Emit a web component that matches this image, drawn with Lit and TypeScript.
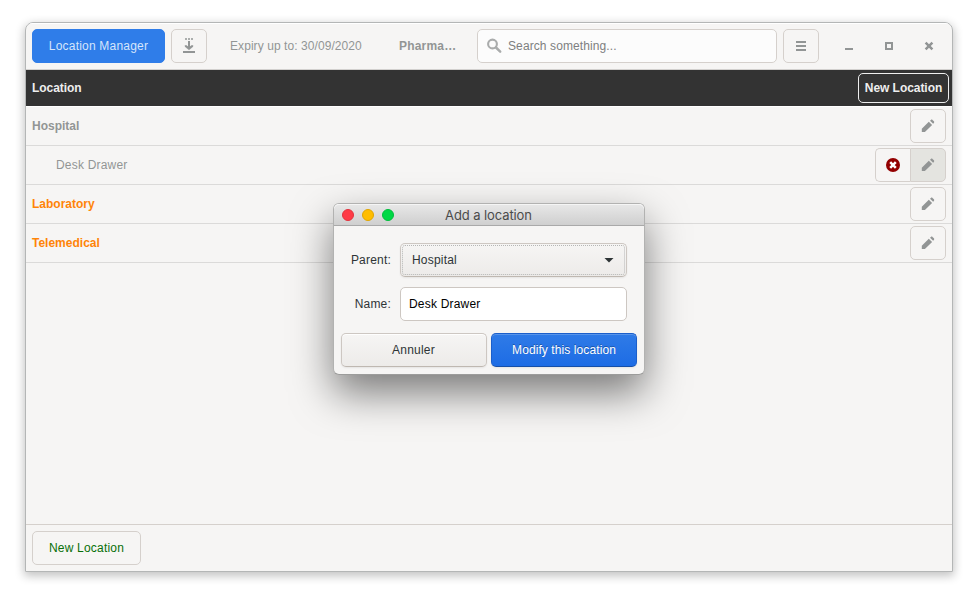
import { LitElement, html, css, svg } from "lit";
import { customElement, property } from "lit/decorators.js";
import { classMap } from "lit/directives/class-map.js";

const glyphs: Record<string, unknown> = {
  download: svg`<path d="M4 0h2v2H4zM7 0h2v2H7zM10 0h2v2h-2z" opacity=".75"/><path d="M7 3h2v5h3v1.2L8 12.6 4 9.2V8h3z" opacity=".2"/><path d="M7 3h2v5.4l1.4-1.2h1.8v1.4L8 12 3.8 8.6V7.2h1.8L7 8.4zM2 13h12v2H2z"/>`,
  search: svg`<circle cx="5.5" cy="6" r="4.4" fill="none" stroke="currentColor" stroke-width="2.1"/><path d="M9 9.5l4.2 4.1" stroke="currentColor" stroke-width="2.5" stroke-linecap="round"/>`,
  menu: svg`<path d="M3 3h10v2H3zM3 7h10v2H3zM3 11h10v2H3z"/>`,
  minimize: svg`<path d="M4 10h8v2H4z"/>`,
  maximize: svg`<path d="M4 4h8v8H4zM6 6v4h4V6z" fill-rule="evenodd"/>`,
  close: svg`<path d="M4.6 4.6l6.8 6.8M11.4 4.6l-6.8 6.8" stroke="currentColor" stroke-width="2.5"/>`,
  pencil: svg`<path d="M8.8 3.8l3.3 3.3-7.2 7H1.8v-3.3zM10 2.7l.9-.8c.5-.5 1.1-.5 1.6 0l1.4 1.4c.5.5.5 1.1 0 1.6l-.8.9z"/>`,
  remove: svg`<circle cx="8" cy="8" r="7"/><path d="M5.2 5.2l5.6 5.6M10.8 5.2l-5.6 5.6" stroke="#fff" stroke-width="2.5"/>`,
};

@customElement("ui-icon")
class UiIcon extends LitElement {
  @property() name = "";
  static styles = css`
    :host { display: block; width: 16px; height: 16px; flex: none; }
    svg { display: block; fill: currentColor; }
  `;
  render() {
    return html`<svg width="16" height="16" viewBox="0 0 16 16">${glyphs[this.name]}</svg>`;
  }
}

interface Place {
  name: string;
  kind: "parent" | "child" | "empty";
}

const places: Place[] = [
  { name: "Hospital", kind: "parent" },
  { name: "Desk Drawer", kind: "child" },
  { name: "Laboratory", kind: "empty" },
  { name: "Telemedical", kind: "empty" },
];

@customElement("location-dialog")
class LocationDialog extends LitElement {
  static styles = css`
    * { box-sizing: border-box; }
    :host {
      display: flex; flex-direction: column; box-sizing: border-box;
      width: 312px; height: 172px; border: 1px solid #b2b2b1; border-bottom-color: #9c9c9b;
      border-radius: 6px; background: #f6f5f4; color: #2e3436;
      box-shadow: 0 18px 40px rgba(0, 0, 0, .5);
    }
    .title {
      display: grid; grid-template-columns: 60px 1fr 60px; align-items: center;
      height: 22px; border-bottom: 1px solid #a9a9a9; border-radius: 5px 5px 0 0;
      background: linear-gradient(#e8e8e8, #cfcfcf); box-shadow: inset 0 1px #f5f5f5;
      font: 13px/16px Inter, sans-serif; color: #4b4b4b; text-align: center; letter-spacing: -.1px;
    }
    .caption { margin-right: 1px; padding-top: 1px; }
    .lights { display: flex; gap: 8px; padding-left: 8px; }
    .light { width: 12px; height: 12px; border-radius: 50%; border: 1px solid; }
    .red { background: #ff3b47; border-color: #e2333e; }
    .amber { background: #ffbd00; border-color: #e0a500; }
    .green { background: #00d845; border-color: #00be3c; }
    .form {
      display: grid; grid-template-columns: 57px 227px; column-gap: 9px; row-gap: 10px;
      padding: 17px 0 12px 0; align-items: center;
    }
    .label { text-align: right; }
    .field {
      display: flex; align-items: center; justify-content: space-between;
      height: 34px; border: 1px solid #cdc7c2; border-radius: 5px;
    }
    .combo {
      position: relative; padding: 0 12px 0 11px; background: linear-gradient(#f6f5f4, #edebe9);
      border-bottom-color: #bfb8b1; box-shadow: 0 1px 2px rgba(0, 0, 0, .07);
    }
    .combo::after {
      content: ""; position: absolute; inset: 1px; border: 1px dotted #b5b6b5; border-radius: 3px;
    }
    .arrow { width: 10px; height: 5px; background: #2e3436; clip-path: polygon(0 0, 100% 0, 50% 100%); }
    .entry { padding: 0 8px; background: #fff; color: #000; }
    .actions { display: flex; gap: 4px; padding: 0 7px; }
    .action {
      display: flex; align-items: center; justify-content: center; width: 146px; height: 34px;
      padding-right: 1px; border: 1px solid #cdc7c2; border-bottom-color: #bfb8b1; border-radius: 5px;
      background: linear-gradient(#f6f5f4, #edebe9);
      box-shadow: inset 0 1px rgba(255, 255, 255, .9), 0 1px 2px rgba(0, 0, 0, .07);
    }
    .primary {
      padding-right: 0; color: #fff; border-color: #1b5fcb; border-bottom-color: #164fa8;
      background: linear-gradient(#2f7be7, #1d6ce5); letter-spacing: .09px;
      box-shadow: inset 0 1px rgba(255, 255, 255, .2), 0 1px 2px rgba(0, 0, 0, .07);
      text-shadow: 0 -1px rgba(0, 0, 0, .3);
    }
  `;
  render() {
    return html`
      <div class="title">
        <div class="lights">
          <span class="light red"></span><span class="light amber"></span><span class="light green"></span>
        </div>
        <span class="caption">Add a location</span>
      </div>
      <div class="form">
        <span class="label">Parent:</span>
        <div class="field combo"><span>Hospital</span><span class="arrow"></span></div>
        <span class="label">Name:</span>
        <div class="field entry">Desk Drawer</div>
      </div>
      <div class="actions">
        <div class="action">Annuler</div>
        <div class="action primary">Modify this location</div>
      </div>
    `;
  }
}

@customElement("app-root")
class AppRoot extends LitElement {
  static styles = css`
    * { box-sizing: border-box; }
    :host {
      display: block; position: relative; box-sizing: border-box; width: 978px; height: 600px;
      padding: 22px 25px 28px; overflow: hidden; background: #fff; color: #929595;
      font: 12px/16px "Liberation Sans", sans-serif; letter-spacing: .2px; white-space: nowrap;
    }
    .window {
      display: flex; flex-direction: column; height: 550px; border: 1px solid #b4b6b6;
      border-radius: 8px 8px 0 0; overflow: hidden; background: #f6f5f4;
    }
    .shade { border-radius: 8px 8px 0 0; box-shadow: 0 3px 10px 1px rgba(0, 0, 0, .24); }
    .header {
      display: flex; align-items: center; height: 47px; padding: 0 6px;
      border-bottom: 1px solid #d2d0ce; box-shadow: inset 0 1px #fff;
    }
    .button {
      display: flex; align-items: center; justify-content: center;
      width: 36px; height: 34px; border: 1px solid #d5d0cc; border-radius: 5px;
    }
    .manager { width: 133px; margin-right: 6px; background: #2f7de9; border-color: #2f7de9; color: #d5e5fb; }
    .expiry { width: 133px; margin-left: 23px; letter-spacing: .07px; }
    .store { width: 58px; margin-left: 36px; font-weight: bold; }
    .search {
      display: flex; align-items: center; gap: 5px; width: 300px; height: 34px;
      margin: 0 6px 0 20px; padding: 0 9px; border: 1px solid #d5d0cc; border-radius: 5px;
      background: #fcfcfc; color: #7e8080; letter-spacing: .1px;
    }
    .search ui-icon { color: #aaacac; }
    .controls { display: flex; gap: 24px; margin-left: 22px; }
    .heading {
      display: flex; align-items: center; justify-content: space-between; height: 36px;
      padding: 0 3px 0 6px; background: #333; color: #eee; font-weight: bold; letter-spacing: -.05px;
    }
    .outlined {
      display: flex; align-items: center; justify-content: center; width: 91px; height: 30px;
      border: 1px solid #eee; border-radius: 5px;
    }
    .list { flex: 1; border-top: 1px solid #fff; }
    .row {
      display: flex; align-items: center; justify-content: space-between; height: 39px;
      padding: 0 6px; border-bottom: 1px solid #dbdad9; font-weight: bold; letter-spacing: 0;
    }
    .child { padding-left: 30px; font-weight: normal; letter-spacing: .2px; }
    .empty { color: #ff8408; }
    .tools { display: flex; color: #929595; }
    .delete { color: #930000; border-radius: 5px 0 0 5px; border-right: 0; width: 35px; }
    .active { background: #e4e4e0; border-radius: 0 5px 5px 0; }
    .footer { height: 47px; padding: 6px; border-top: 1px solid #d5d0cc; }
    .create { width: 109px; color: #087008; }
    location-dialog { position: absolute; left: 333px; top: 203px; }
  `;

  private row(place: Place) {
    const child = place.kind === "child";
    return html`
      <div class=${classMap({ row: true, child, empty: place.kind === "empty" })}>
        <span>${place.name}</span>
        <div class="tools">
          ${child ? html`<div class="button delete"><ui-icon name="remove"></ui-icon></div>` : ""}
          <div class=${classMap({ button: true, active: child })}><ui-icon name="pencil"></ui-icon></div>
        </div>
      </div>
    `;
  }

  render() {
    return html`
      <div class="shade">
        <div class="window">
          <div class="header">
            <div class="button manager">Location Manager</div>
            <div class="button"><ui-icon name="download"></ui-icon></div>
            <span class="expiry">Expiry up to: 30/09/2020</span>
            <span class="store">Pharma…</span>
            <div class="search"><ui-icon name="search"></ui-icon><span>Search something...</span></div>
            <div class="button"><ui-icon name="menu"></ui-icon></div>
            <div class="controls">
              <ui-icon name="minimize"></ui-icon>
              <ui-icon name="maximize"></ui-icon>
              <ui-icon name="close"></ui-icon>
            </div>
          </div>
          <div class="heading"><span>Location</span><div class="outlined">New Location</div></div>
          <div class="list">${places.map((place) => this.row(place))}</div>
          <div class="footer"><div class="button create">New Location</div></div>
        </div>
      </div>
      <location-dialog></location-dialog>
    `;
  }
}
